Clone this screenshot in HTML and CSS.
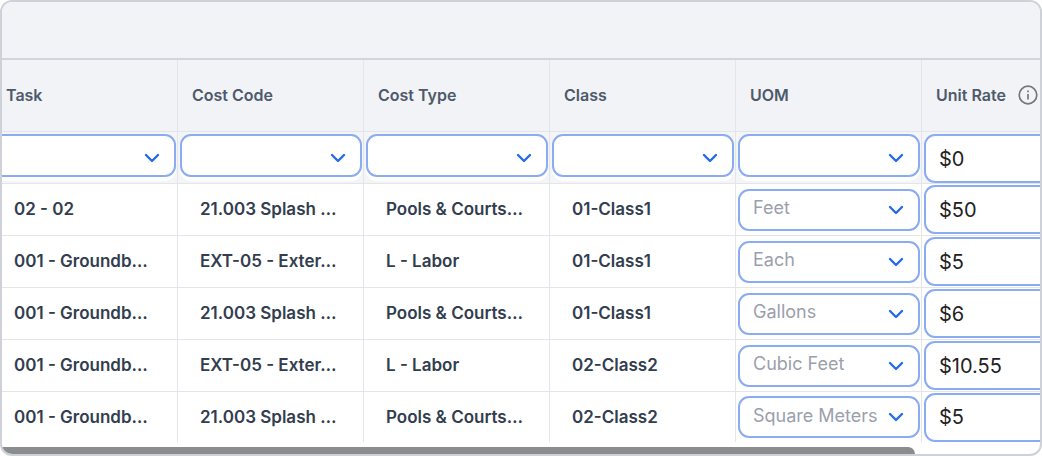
FILE: index.html
```
<!DOCTYPE html>
<html lang="en">
<head>
    <meta charset="UTF-8">
    <meta name="viewport" content="width=device-width, initial-scale=1.0">
    <title>Cost Items</title>
    <link rel="stylesheet" href="styles.css">
</head>
<body>
    <div class="grid">
        <div class="toolbar"></div>
        <table class="items">
            <colgroup>
                <col class="col-task">
                <col class="col">
                <col class="col">
                <col class="col">
                <col class="col">
                <col>
            </colgroup>
            <thead>
                <tr>
                    <th>Task</th>
                    <th>Cost Code</th>
                    <th>Cost Type</th>
                    <th>Class</th>
                    <th>UOM</th>
                    <th>
                        <div class="rate-head">
                            Unit Rate
                            <svg class="info" viewBox="0 0 20 20" fill="none" stroke="#75777b" stroke-width="1.7">
                                <circle cx="10" cy="10" r="8.8"/>
                                <path d="M10 9v5.4M10 5.4v1.9"/>
                            </svg>
                        </div>
                    </th>
                </tr>
            </thead>
            <tbody>
                <tr class="filters">
                    <td><select class="cut-left" aria-label="Task"><option></option></select></td>
                    <td><select aria-label="Cost Code"><option></option></select></td>
                    <td><select aria-label="Cost Type"><option></option></select></td>
                    <td><select aria-label="Class"><option></option></select></td>
                    <td><select aria-label="UOM"><option></option></select></td>
                    <td><input type="text" aria-label="Unit Rate" value="$0"></td>
                </tr>
                <tr>
                    <td class="text">02 - 02</td>
                    <td class="text">21.003 Splash …</td>
                    <td class="text">Pools &amp; Courts…</td>
                    <td class="text">01-Class1</td>
                    <td><select aria-label="UOM"><option>Feet</option></select></td>
                    <td><input type="text" aria-label="Unit Rate" value="$50"></td>
                </tr>
                <tr>
                    <td class="text">001 - Groundb…</td>
                    <td class="text">EXT-05 - Exter…</td>
                    <td class="text">L - Labor</td>
                    <td class="text">01-Class1</td>
                    <td><select aria-label="UOM"><option>Each</option></select></td>
                    <td><input type="text" aria-label="Unit Rate" value="$5"></td>
                </tr>
                <tr>
                    <td class="text">001 - Groundb…</td>
                    <td class="text">21.003 Splash …</td>
                    <td class="text">Pools &amp; Courts…</td>
                    <td class="text">01-Class1</td>
                    <td><select aria-label="UOM"><option>Gallons</option></select></td>
                    <td><input type="text" aria-label="Unit Rate" value="$6"></td>
                </tr>
                <tr>
                    <td class="text">001 - Groundb…</td>
                    <td class="text">EXT-05 - Exter…</td>
                    <td class="text">L - Labor</td>
                    <td class="text">02-Class2</td>
                    <td><select aria-label="UOM"><option>Cubic Feet</option></select></td>
                    <td><input type="text" aria-label="Unit Rate" value="$10.55"></td>
                </tr>
                <tr>
                    <td class="text">001 - Groundb…</td>
                    <td class="text">21.003 Splash …</td>
                    <td class="text">Pools &amp; Courts…</td>
                    <td class="text">02-Class2</td>
                    <td><select aria-label="UOM"><option>Square Meters</option></select></td>
                    <td><input type="text" aria-label="Unit Rate" value="$5"></td>
                </tr>
            </tbody>
        </table>
        <div class="scrollbar"><div class="thumb"></div></div>
    </div>
</body>
</html>
```
FILE: styles.css
```
* {
    box-sizing: border-box;
}

body {
    margin: 0;
    background: #fff;
    font-family: Inter, "Liberation Sans", sans-serif;
}

.grid {
    border: 2px solid #ced1d8;
    border-radius: 12px;
    overflow: hidden;
    background: #fff;
}

.toolbar {
    height: 58px;
    background: #f1f3f7;
    border-bottom: 2px solid #ced5db;
}

.items {
    width: 100%;
    table-layout: fixed;
    border-collapse: separate;
    border-spacing: 0;
}

.col-task {
    width: 176px;
}

.col {
    width: 186px;
}

th,
td {
    padding: 0;
    border-right: 1px solid #e4e5ea;
    border-bottom: 1px solid #e4e5ea;
    text-align: left;
}

th:last-child,
td:last-child {
    border-right: none;
}

th {
    height: 72px;
    padding: 0 0 2px 14px;
    background: #f1f3f7;
    color: #4e596a;
    font-size: 16px;
    font-weight: 600;
    white-space: nowrap;
}

th:first-child {
    padding-left: 4px;
}

.rate-head {
    display: flex;
    align-items: center;
    gap: 12px;
}

.info {
    width: 20px;
    height: 20px;
    flex: none;
}

td {
    height: 52px;
    padding: 0 1px 0 2px;
}

tr:last-child td {
    height: 50px;
    border-bottom: none;
}

td.text {
    padding: 0 0 1px 22px;
    color: #323d4f;
    font-size: 17px;
    font-weight: 600;
    white-space: nowrap;
    overflow: hidden;
}

td:first-child.text {
    padding-left: 12px;
}

select,
input {
    display: block;
    width: 100%;
    margin: 0;
    border: 2px solid #8bacf1;
    border-radius: 11px;
    background-color: #fff;
    font-family: inherit;
}

select {
    appearance: none;
    height: 42px;
    padding: 0 40px 4px 13px;
    color: #9b9fac;
    font-size: 18px;
    background-image: url("data:image/svg+xml,%3Csvg xmlns='http://www.w3.org/2000/svg' width='16' height='10' fill='none' stroke='%23256bea' stroke-width='2.4' stroke-linecap='round' stroke-linejoin='round'%3E%3Cpath d='M2 2l6 6 6-6'/%3E%3C/svg%3E");
    background-repeat: no-repeat;
    background-position: right 14px center;
}

input {
    height: 49px;
    padding: 0 0 0 13px;
    border-right: none;
    border-radius: 11px 0 0 11px;
    color: #222;
    font-size: 20px;
}

td:last-child {
    padding-right: 0;
}

.filters td {
    padding-top: 2px;
    background: #f4f5f7;
    vertical-align: top;
}

.filters select {
    height: 43px;
    background-position: right 14px bottom 12px;
    box-shadow: 0 4px 0 #fff;
}

td:first-child {
    padding-left: 0;
}

.cut-left {
    border-left: none;
    border-radius: 0 11px 11px 0;
}

.scrollbar {
    padding-top: 5px;
}

.thumb {
    width: 88%;
    height: 7px;
    border-top-right-radius: 7px;
    background: #8b8c8d;
}
```
